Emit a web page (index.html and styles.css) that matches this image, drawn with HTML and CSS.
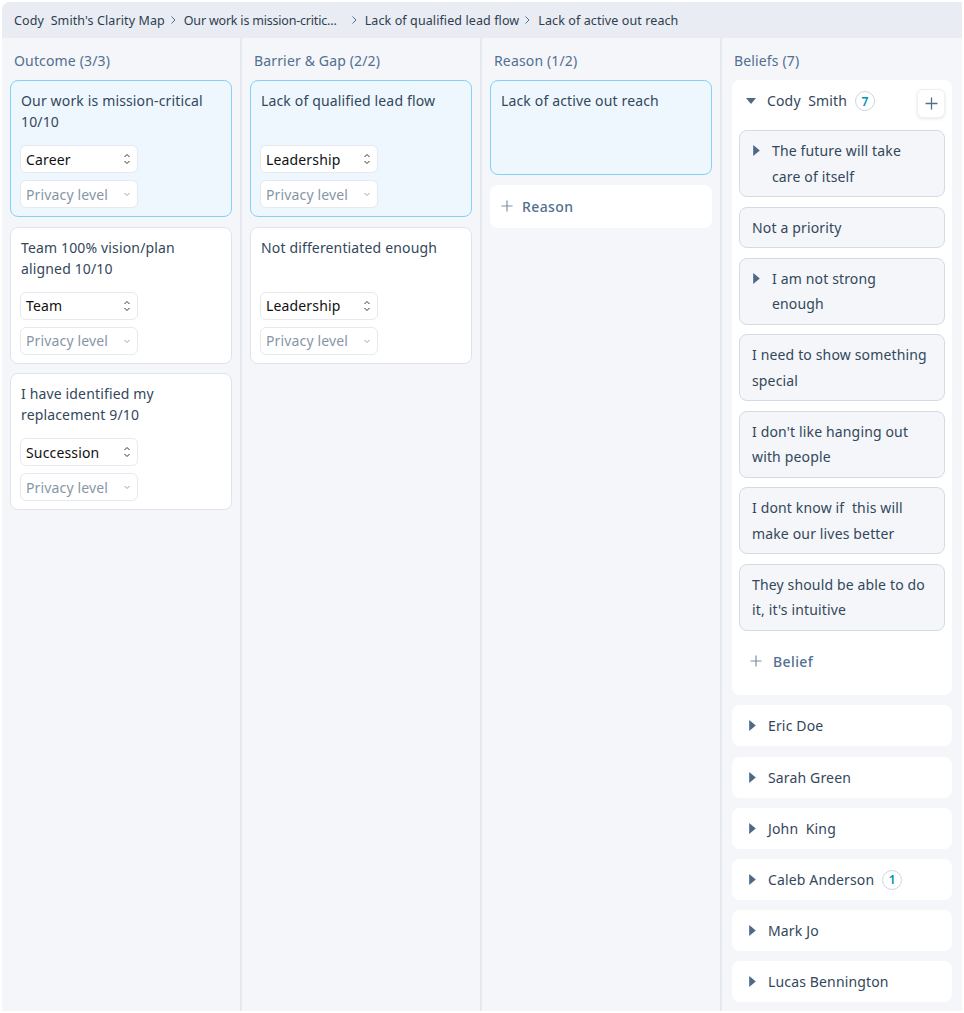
FILE: index.html
```html
<!DOCTYPE html>
<html lang="en">

<head>
    <meta charset="UTF-8">
    <meta name="viewport" content="width=device-width, initial-scale=1.0">
    <title>Cody Smith's Clarity Map</title>
    <link rel="stylesheet" href="styles.css">
</head>

<body>
    <div class="app">
        <nav class="crumbs">
            <span class="crumb">Cody&nbsp; Smith's Clarity Map</span>
            <svg class="crumb-sep" viewBox="0 0 8 10"><path d="M2.5 1.5 6 5l-3.5 3.5" /></svg>
            <span class="crumb crumb-cut">Our work is mission-critic…</span>
            <svg class="crumb-sep" viewBox="0 0 8 10"><path d="M2.5 1.5 6 5l-3.5 3.5" /></svg>
            <span class="crumb">Lack of qualified lead flow</span>
            <svg class="crumb-sep" viewBox="0 0 8 10"><path d="M2.5 1.5 6 5l-3.5 3.5" /></svg>
            <span class="crumb">Lack of active out reach</span>
        </nav>

        <main class="board">
            <!-- outcome -->
            <section class="col">
                <h2 class="col-title">Outcome (3/3)</h2>
                <div class="card active">
                    <p class="card-text">Our work is mission-critical 10/10</p>
                    <div class="field">
                        <span>Career</span>
                        <svg class="updown" viewBox="0 0 8 14"><path d="M1.5 5 4 2.5 6.5 5M1.5 9 4 11.5 6.5 9" /></svg>
                    </div>
                    <div class="field muted">
                        <span>Privacy level</span>
                        <svg class="down" viewBox="0 0 8 6"><path d="M1.5 2 4 4.5 6.5 2" /></svg>
                    </div>
                </div>
                <div class="card">
                    <p class="card-text">Team 100% vision/plan aligned 10/10</p>
                    <div class="field">
                        <span>Team</span>
                        <svg class="updown" viewBox="0 0 8 14"><path d="M1.5 5 4 2.5 6.5 5M1.5 9 4 11.5 6.5 9" /></svg>
                    </div>
                    <div class="field muted">
                        <span>Privacy level</span>
                        <svg class="down" viewBox="0 0 8 6"><path d="M1.5 2 4 4.5 6.5 2" /></svg>
                    </div>
                </div>
                <div class="card">
                    <p class="card-text">I have identified my replacement 9/10</p>
                    <div class="field">
                        <span>Succession</span>
                        <svg class="updown" viewBox="0 0 8 14"><path d="M1.5 5 4 2.5 6.5 5M1.5 9 4 11.5 6.5 9" /></svg>
                    </div>
                    <div class="field muted">
                        <span>Privacy level</span>
                        <svg class="down" viewBox="0 0 8 6"><path d="M1.5 2 4 4.5 6.5 2" /></svg>
                    </div>
                </div>
            </section>

            <!-- barrier -->
            <section class="col">
                <h2 class="col-title">Barrier &amp; Gap (2/2)</h2>
                <div class="card active">
                    <p class="card-text">Lack of qualified lead flow</p>
                    <div class="field">
                        <span>Leadership</span>
                        <svg class="updown" viewBox="0 0 8 14"><path d="M1.5 5 4 2.5 6.5 5M1.5 9 4 11.5 6.5 9" /></svg>
                    </div>
                    <div class="field muted">
                        <span>Privacy level</span>
                        <svg class="down" viewBox="0 0 8 6"><path d="M1.5 2 4 4.5 6.5 2" /></svg>
                    </div>
                </div>
                <div class="card">
                    <p class="card-text">Not differentiated enough</p>
                    <div class="field">
                        <span>Leadership</span>
                        <svg class="updown" viewBox="0 0 8 14"><path d="M1.5 5 4 2.5 6.5 5M1.5 9 4 11.5 6.5 9" /></svg>
                    </div>
                    <div class="field muted">
                        <span>Privacy level</span>
                        <svg class="down" viewBox="0 0 8 6"><path d="M1.5 2 4 4.5 6.5 2" /></svg>
                    </div>
                </div>
            </section>

            <!-- reason -->
            <section class="col">
                <h2 class="col-title">Reason (1/2)</h2>
                <div class="card active reason">
                    <p class="card-text">Lack of active out reach</p>
                </div>
                <div class="add-card">
                    <svg class="plus" viewBox="0 0 12 12"><path d="M6 0.5v11M0.5 6h11" /></svg>
                    <span>Reason</span>
                </div>
            </section>

            <!-- beliefs -->
            <section class="col beliefs">
                <h2 class="col-title">Beliefs (7)</h2>
                <div class="group open">
                    <div class="group-head">
                        <svg class="caret-down" viewBox="0 0 10 6"><path d="M0 0h10L5 6z" /></svg>
                        <span class="group-name">Cody&nbsp; Smith</span>
                        <span class="count">7</span>
                        <button class="add-btn">
                            <svg class="plus" viewBox="0 0 12 12"><path d="M6 0.5v11M0.5 6h11" /></svg>
                        </button>
                    </div>
                    <div class="belief has-kids">
                        <svg class="caret" viewBox="0 0 6 10"><path d="M0 0v10l6-5z" /></svg>
                        <span>The future will take care of itself</span>
                    </div>
                    <div class="belief">Not a priority</div>
                    <div class="belief has-kids">
                        <svg class="caret" viewBox="0 0 6 10"><path d="M0 0v10l6-5z" /></svg>
                        <span>I am not strong enough</span>
                    </div>
                    <div class="belief">I need to show something special</div>
                    <div class="belief">I don't like hanging out with people</div>
                    <div class="belief">I dont know if&nbsp; this will make our lives better</div>
                    <div class="belief">They should be able to do it, it's intuitive</div>
                    <div class="add-belief">
                        <svg class="plus" viewBox="0 0 12 12"><path d="M6 0.5v11M0.5 6h11" /></svg>
                        <span>Belief</span>
                    </div>
                </div>

                <div class="group">
                    <svg class="caret" viewBox="0 0 6 10"><path d="M0 0v10l6-5z" /></svg>
                    <span class="group-name">Eric Doe</span>
                </div>
                <div class="group">
                    <svg class="caret" viewBox="0 0 6 10"><path d="M0 0v10l6-5z" /></svg>
                    <span class="group-name">Sarah Green</span>
                </div>
                <div class="group">
                    <svg class="caret" viewBox="0 0 6 10"><path d="M0 0v10l6-5z" /></svg>
                    <span class="group-name">John&nbsp; King</span>
                </div>
                <div class="group">
                    <svg class="caret" viewBox="0 0 6 10"><path d="M0 0v10l6-5z" /></svg>
                    <span class="group-name">Caleb Anderson</span>
                    <span class="count">1</span>
                </div>
                <div class="group">
                    <svg class="caret" viewBox="0 0 6 10"><path d="M0 0v10l6-5z" /></svg>
                    <span class="group-name">Mark Jo</span>
                </div>
                <div class="group">
                    <svg class="caret" viewBox="0 0 6 10"><path d="M0 0v10l6-5z" /></svg>
                    <span class="group-name">Lucas Bennington</span>
                </div>
            </section>
        </main>
    </div>
</body>

</html>
```

FILE: styles.css
```css
:root {
    --text-color: #33475b;
    --label-color: #516f90;
    --col-bg: #f5f6fa;
    --bar-bg: #eaecf3;
    --line-color: #e7e9f0;
    --card-border: #dfe3eb;
    --active-bg: #eef7fe;
    --active-border: #82d2f6;
    --item-bg: #f4f6f9;
    --item-border: #d3dbe5;
    --badge-color: #0091ae;
}

* {
    box-sizing: border-box;
    margin: 0;
    padding: 0;
}

body {
    font-family: 'Noto Sans', 'Liberation Sans', Arial, sans-serif;
    font-size: 14px;
    letter-spacing: 0.15px;
    color: var(--text-color);
    background-color: #fff;
    padding: 2px;
}

.app {
    width: 960px;
    height: 1009px;
    background-color: var(--col-bg);
    border-top-left-radius: 8px;
    overflow: hidden;
    display: flex;
    flex-direction: column;
}

/* breadcrumb */
.crumbs {
    height: 36px;
    flex-shrink: 0;
    background-color: var(--bar-bg);
    display: flex;
    align-items: center;
    padding: 0 12px;
    font-size: 12.5px;
    letter-spacing: 0.1px;
    color: #2d3e50;
}

.crumb {
    white-space: nowrap;
}

.crumb-cut {
    margin-right: 9px;
    letter-spacing: -0.2px;
}

.crumb-sep {
    width: 8px;
    height: 10px;
    margin: 0 7px 0 4px;
    fill: none;
    stroke: #516f90;
    stroke-width: 1;
}

/* board */
.board {
    flex: 1;
    display: flex;
}

.col {
    width: 240px;
    border-right: 2px solid var(--line-color);
    padding: 0 8px;
    display: flex;
    flex-direction: column;
    gap: 9.5px;
}

.col:last-child {
    border-right: none;
    padding: 0 10px;
    gap: 10.2px;
}

.col-title {
    height: 32.5px;
    padding: 13px 4px 0;
    font-size: 14px;
    font-weight: 400;
    line-height: 20px;
    color: var(--label-color);
}

.beliefs .col-title {
    height: 32px;
    padding-left: 2px;
}

/* cards */
.card {
    background-color: #fff;
    border: 1px solid var(--card-border);
    border-radius: 8px;
    padding: 9px 9px 8px 10px;
    display: flex;
    flex-direction: column;
    gap: 7px;
}

.card.active {
    background-color: var(--active-bg);
    border-color: var(--active-border);
}

.card.reason {
    height: 95px;
}

.card-text {
    min-height: 42px;
    line-height: 21px;
    margin-bottom: 6px;
    padding-right: 6px;
}

.field {
    width: 118px;
    height: 28px;
    margin-left: -1px;
    background-color: #fff;
    border: 1px solid #e6e9ef;
    border-radius: 6px;
    display: flex;
    align-items: center;
    justify-content: space-between;
    padding: 0 6px 0 5px;
    color: #111;
}

.field.muted {
    color: #8796a6;
}

.updown {
    width: 8px;
    height: 14px;
    fill: none;
    stroke: #333;
    stroke-width: 1;
}

.down {
    width: 8px;
    height: 6px;
    fill: none;
    stroke: #9aa6b3;
    stroke-width: 1;
}

.add-card {
    background-color: #fff;
    border-radius: 8px;
    height: 43px;
    display: flex;
    align-items: center;
    gap: 9px;
    padding: 0 11px;
    color: var(--label-color);
    font-weight: 500;
    letter-spacing: 0.4px;
}

.plus {
    width: 12px;
    height: 12px;
    fill: none;
    stroke: #7c90a6;
    stroke-width: 1.2;
}

/* beliefs */
.group {
    background-color: #fff;
    border-radius: 8px;
    height: 41px;
    flex-shrink: 0;
    display: flex;
    align-items: center;
    padding: 0 15px 0 17px;
    gap: 12px;
}

.group.open {
    height: auto;
    display: block;
    padding: 9px 7px 13px;
}

.group-head {
    display: flex;
    align-items: flex-start;
    height: 29px;
    padding-left: 7px;
    margin-bottom: 12px;
}

.group-name {
    white-space: nowrap;
}

.group-head .group-name {
    margin: 2px 0 0 11px;
    line-height: 20px;
}

.caret-down {
    width: 10px;
    height: 6px;
    margin-top: 9px;
    fill: #4d6987;
}

.caret {
    width: 7px;
    height: 11px;
    flex-shrink: 0;
    fill: #4d6987;
}

.count {
    width: 20px;
    height: 20px;
    border: 1px solid #cbd6e2;
    border-radius: 50%;
    display: inline-flex;
    align-items: center;
    justify-content: center;
    font-size: 12px;
    font-weight: 600;
    color: var(--badge-color);
    margin-left: -4px;
}

.group-head .count {
    margin: 2px 0 0 8px;
}

.add-btn {
    margin-left: auto;
    width: 28px;
    height: 29px;
    background-color: #fff;
    border: 1px solid #eef0f4;
    border-radius: 6px;
    box-shadow: 0 1px 3px rgba(45, 62, 80, 0.12);
    display: flex;
    align-items: center;
    justify-content: center;
}

.add-btn .plus {
    width: 13px;
    height: 13px;
    stroke: #516f90;
}

.belief {
    background-color: var(--item-bg);
    border: 1px solid var(--item-border);
    border-radius: 8px;
    padding: 7px 15px 7px 12px;
    line-height: 25.4px;
    margin-bottom: 9.7px;
}

.belief.has-kids {
    display: flex;
    align-items: flex-start;
    gap: 12px;
    padding-left: 13px;
}

.belief.has-kids .caret {
    margin-top: 7px;
}

.add-belief {
    display: flex;
    align-items: center;
    gap: 11px;
    height: 42px;
    padding: 0 11px;
    color: var(--label-color);
    font-weight: 500;
    letter-spacing: 0.4px;
}
```
